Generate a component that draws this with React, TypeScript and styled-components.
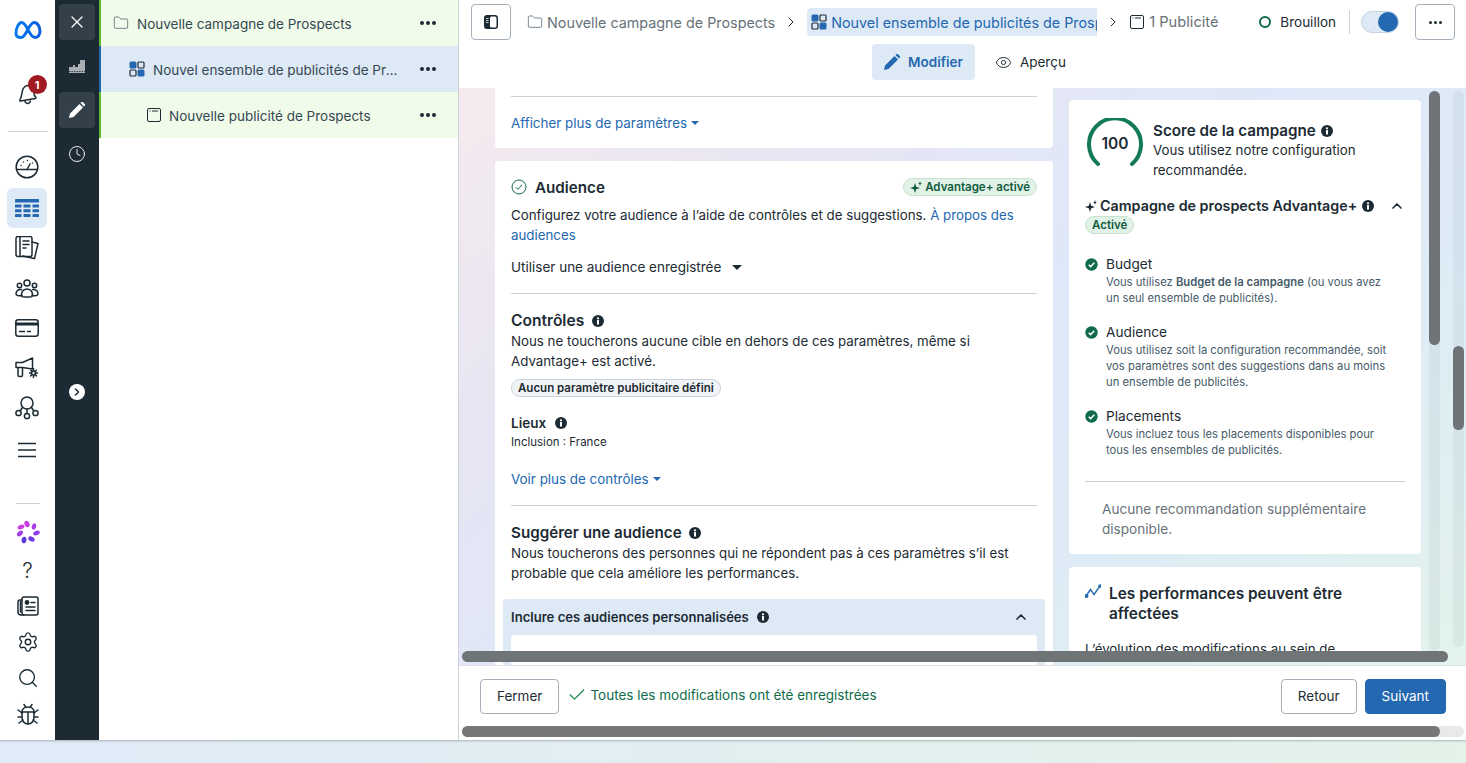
import React from 'react';
import styled, { createGlobalStyle } from 'styled-components';
import { Check, ChevronRight, ChevronUp, Clock, Eye, Folder, Search, Settings, X } from 'lucide-react';

const GlobalStyle = createGlobalStyle`
  html, body {
    margin: 0;
    padding: 0;
    height: 100%;
    overflow: hidden;
    font-family: "Inter", "Roboto", "Liberation Sans", sans-serif;
    color: #1c2b33;
    background: linear-gradient(90deg, #e0ebf8, #e3f3ea);
  }
  * { box-sizing: border-box; }
  svg { flex: none; }
`;

const Page = styled.div`
  width: 1466px;
  height: 763px;
`;

const Window = styled.div`
  display: flex;
  width: 1466px;
  height: 740px;
  background: #fff;
  box-shadow: 0 1px 2px rgba(0, 0, 0, 0.25);
`;

// Left navigation rail
const Rail = styled.nav`
  display: flex;
  flex-direction: column;
  align-items: center;
  flex: 0 0 55px;
  padding: 10px 0 8px;
`;

const RailLogo = styled.div`
  display: flex;
  align-items: center;
  justify-content: center;
  height: 40px;
`;

const RailBell = styled.div`
  position: relative;
  display: flex;
  align-items: center;
  justify-content: center;
  width: 40px;
  height: 40px;
  margin-top: 24px;
`;

const Badge = styled.span`
  position: absolute;
  top: 1px;
  left: 20px;
  display: flex;
  align-items: center;
  justify-content: center;
  width: 19px;
  height: 19px;
  border-radius: 50%;
  background: #a11a22;
  color: #fff;
  font-size: 11px;
  font-weight: 700;
`;

const RailDivider = styled.div<{ $width: number }>`
  flex: none;
  width: ${({ $width }) => $width}px;
  height: 1px;
  margin: 17px 0 15px;
  background: #cbd2d9;
`;

const RailGroup = styled.div`
  display: flex;
  flex-direction: column;
  gap: 0.5px;
  margin-right: 1px;
`;

const RailItem = styled.div<{ $active?: boolean }>`
  display: flex;
  align-items: center;
  justify-content: center;
  width: 40px;
  height: 40px;
  border-radius: 6px;
  background: ${({ $active }) => ($active ? '#dee9f6' : 'transparent')};
  color: #1c2b33;
`;

const RailBottom = styled.div`
  display: flex;
  flex-direction: column;
  align-items: center;
  margin-top: auto;
`;

const RailBottomDivider = styled.div`
  width: 24px;
  height: 1px;
  margin-bottom: 10px;
  background: #cbd2d9;
`;

const RailSmallItem = styled.div<{ $gapBelow?: boolean }>`
  display: flex;
  align-items: center;
  justify-content: center;
  width: 40px;
  height: 36px;
  margin-bottom: ${({ $gapBelow }) => ($gapBelow ? '2px' : '0')};
  color: #1c2b33;
`;

const QuestionMark = styled.span`
  font-size: 21px;
  font-weight: 300;
  line-height: 1;
`;

// Dark tool rail
const ToolRail = styled.div`
  display: flex;
  flex-direction: column;
  align-items: center;
  flex: 0 0 44px;
  gap: 8px;
  padding-top: 4px;
  background: #1c2b33;
`;

const ToolButton = styled.div<{ $active?: boolean }>`
  display: flex;
  align-items: center;
  justify-content: center;
  width: 36px;
  height: 36px;
  border-radius: 4px;
  background: ${({ $active }) => ($active ? '#344049' : 'transparent')};
  color: #fff;
`;

const ExpandButton = styled.div`
  display: flex;
  align-items: center;
  justify-content: center;
  width: 16px;
  height: 16px;
  margin-top: 204px;
  border-radius: 50%;
  background: #fff;
  color: #1c2b33;
`;

// Campaign tree
const TreePanel = styled.aside`
  flex: 0 0 360px;
  min-width: 0;
  border-right: 1px solid #cbd2d9;
`;

const TreeRow = styled.div<{ $indent: number; $selected?: boolean }>`
  display: flex;
  align-items: center;
  height: 46px;
  padding-left: ${({ $indent }) => $indent}px;
  padding-right: 22px;
  border-left: 2px solid ${({ $selected }) => ($selected ? '#2368b0' : '#65b92e')};
  background: ${({ $selected }) => ($selected ? '#dee9f6' : '#f1fbe9')};
`;

const TreeLabel = styled.span`
  flex: 1;
  min-width: 0;
  margin-left: 8px;
  margin-right: 20px;
  padding-top: 2px;
  overflow: hidden;
  white-space: nowrap;
  text-overflow: ellipsis;
  font-size: 13.5px;
  color: #344854;
`;

const Dots = styled.span`
  display: flex;
  flex: none;
  gap: 2px;
`;

const Dot = styled.i<{ $size: number }>`
  width: ${({ $size }) => $size}px;
  height: ${({ $size }) => $size}px;
  border-radius: 50%;
  background: #1c2b33;
`;

// Main column
const Main = styled.main`
  position: relative;
  display: flex;
  flex-direction: column;
  flex: 1;
  min-width: 0;
`;

const Header = styled.header`
  flex: 0 0 88px;
`;

const TopRow = styled.div`
  display: flex;
  align-items: center;
  height: 44px;
  padding: 0 11px 0 12px;
`;

const SquareButton = styled.div`
  display: flex;
  align-items: center;
  justify-content: center;
  flex: none;
  width: 40px;
  height: 36px;
  border: 1px solid #a5b0bb;
  border-radius: 4px;
  color: #1c2b33;
`;

const Crumb = styled.div`
  display: flex;
  align-items: center;
  flex: none;
  gap: 4px;
  font-size: 14.35px;
  color: #67737b;
`;

const CrumbFirst = styled(Crumb)`
  margin-left: 16px;
`;

const CrumbLast = styled(Crumb)`
  gap: 5px;
  margin-left: 1px;
  font-size: 14.7px;
`;

const CrumbActive = styled.div`
  display: flex;
  align-items: center;
  flex: 0 0 290px;
  gap: 4px;
  height: 28px;
  padding-left: 4px;
  overflow: hidden;
  border-radius: 4px 0 0 4px;
  background: #dee9f6;
  color: #2368b0;
  font-size: 14.35px;
  white-space: nowrap;
`;

const CrumbArrow = styled.span`
  display: flex;
  justify-content: center;
  flex: 0 0 32px;
  color: #1c2b33;
`;

const Status = styled.div`
  display: flex;
  align-items: center;
  margin-left: auto;
  font-size: 13.5px;
`;

const StatusRing = styled.span`
  width: 12px;
  height: 12px;
  margin-right: 9px;
  border: 2px solid #0f6b4a;
  border-radius: 50%;
`;

const StatusLine = styled.span`
  width: 1px;
  height: 24px;
  margin: 0 11px 0 13px;
  background: #cbd2d9;
`;

const Toggle = styled.div`
  display: flex;
  justify-content: flex-end;
  width: 38px;
  height: 22px;
  margin-right: 16px;
  border: 1px solid #c6d3e2;
  border-radius: 11px;
  background: #dee9f6;
`;

const ToggleKnob = styled.span`
  width: 20px;
  height: 20px;
  border-radius: 50%;
  background: #2368b0;
`;

const ModeRow = styled.div`
  display: flex;
  align-items: center;
  justify-content: center;
  height: 36px;
  padding-left: 13px;
`;

const ModeActive = styled.div`
  display: flex;
  align-items: center;
  gap: 8px;
  height: 36px;
  padding: 0 12px;
  border-radius: 4px;
  background: #dee9f6;
  color: #2368b0;
  font-size: 13.5px;
  font-weight: 600;
`;

const ModeIdle = styled.div`
  display: flex;
  align-items: center;
  gap: 8px;
  margin-left: 20px;
  font-size: 13.5px;
`;

// Editor area
const Content = styled.div`
  position: relative;
  display: flex;
  flex: 0 0 577px;
  gap: 16px;
  padding-left: 36px;
  overflow: hidden;
  background: linear-gradient(140deg, #f6ebef 0%, #e7e5f3 25%, #dfe8f8 48%, #deecf6 72%, #e3f3ec 100%);
`;

const LeftColumn = styled.div`
  display: flex;
  flex-direction: column;
  flex: 0 0 558px;
  gap: 13px;
`;

const RightColumn = styled.div`
  display: flex;
  flex-direction: column;
  flex: 0 0 352px;
  gap: 13px;
  padding-top: 12px;
`;

const Card = styled.section`
  flex: none;
  padding: 0 16px;
  border-radius: 4px;
  background: #fff;
`;

const TopCard = styled(Card)`
  height: 60px;
  border-radius: 0 0 4px 4px;
`;

const Divider = styled.hr`
  height: 1px;
  margin: 0;
  border: 0;
  background: #cbd2d9;
`;

const TopDivider = styled(Divider)`
  margin-top: 8px;
`;

const BlueLink = styled.a`
  color: #2368b0;
`;

const MoreLink = styled.div`
  display: flex;
  align-items: center;
  gap: 4px;
  font-size: 13.4px;
  line-height: 20px;
  color: #2368b0;
`;

const MoreLinkTop = styled(MoreLink)`
  margin-top: 16px;
`;

const Caret = styled.i<{ $size: number }>`
  width: 0;
  height: 0;
  border-left: ${({ $size }) => $size}px solid transparent;
  border-right: ${({ $size }) => $size}px solid transparent;
  border-top: ${({ $size }) => $size}px solid currentColor;
`;

const AudienceCard = styled(Card)`
  padding-top: 16px;
`;

const AudienceHead = styled.div`
  display: flex;
  align-items: center;
  height: 20px;
`;

const AudienceTitle = styled.h2`
  margin: 1px 0 0 8px;
  font-size: 15.2px;
  line-height: 20px;
  font-weight: 600;
`;

const Pill = styled.span<{ $tone: 'green' | 'grey' }>`
  display: flex;
  align-items: center;
  gap: 3px;
  width: fit-content;
  height: 18px;
  padding: 0 6px;
  border-radius: 9px;
  border: 1px solid ${({ $tone }) => ($tone === 'green' ? '#c5e3cf' : '#cbd2d9')};
  background: ${({ $tone }) => ($tone === 'green' ? '#e3f2e6' : '#f1f4f7')};
  color: ${({ $tone }) => ($tone === 'green' ? '#0f5c3f' : '#1c2b33')};
  font-size: 11.5px;
  font-weight: 600;
  white-space: nowrap;
`;

const HeadPill = styled(Pill)`
  margin-left: auto;
`;

const Paragraph = styled.p`
  margin: 0;
  font-size: 13.3px;
  line-height: 20px;
  color: #1c2b33;
`;

const IntroText = styled(Paragraph)`
  margin-top: 8px;
`;

const SavedSelect = styled.div`
  display: flex;
  align-items: center;
  gap: 11px;
  height: 20px;
  margin: 12px 0 16px;
  font-size: 13.5px;
`;

const SectionTitle = styled.h3`
  display: flex;
  align-items: center;
  gap: 8px;
  margin: 0;
  font-size: 15.2px;
  line-height: 20px;
  font-weight: 600;
`;

const ControlsTitle = styled(SectionTitle)`
  margin-top: 17px;
  font-size: 15.6px;
`;

const NoParamsPill = styled(Pill)`
  margin-top: 8px;
`;

const PlaceTitle = styled.div`
  display: flex;
  align-items: center;
  gap: 9px;
  margin-top: 17px;
  font-size: 13.5px;
  line-height: 18px;
  font-weight: 600;
`;

const PlaceText = styled.div`
  margin-top: 2px;
  font-size: 11.5px;
  line-height: 16px;
`;

const MoreControls = styled(MoreLink)`
  margin: 19px 0 16px;
`;

const SuggestTitle = styled(SectionTitle)`
  margin-top: 17px;
  gap: 7px;
`;

const Accordion = styled.div`
  margin: 16px -8px 0;
  padding: 0 8px;
  border-radius: 4px 4px 0 0;
  background: #dee9f6;
`;

const AccordionHead = styled.div`
  display: flex;
  align-items: center;
  gap: 8px;
  height: 36px;
  font-size: 13.1px;
  font-weight: 600;
`;

const AccordionToggle = styled.span`
  display: flex;
  margin-left: auto;
  margin-right: 8px;
`;

const AccordionBody = styled.div`
  height: 40px;
  border-radius: 4px 4px 0 0;
  background: #fff;
`;

const ScoreCard = styled(Card)`
  height: 454px;
  padding-top: 18px;
`;

const ScoreHead = styled.div`
  display: flex;
  gap: 10px;
`;

const ScoreGauge = styled.div`
  position: relative;
  flex: 0 0 56px;
  height: 50px;
  margin-left: 2px;
`;

const ScoreNumber = styled.span`
  position: absolute;
  top: 16px;
  left: 0;
  width: 56px;
  text-align: center;
  font-size: 15.5px;
  font-weight: 600;
`;

const ScoreBody = styled.div`
  flex: 1;
  margin-top: 3px;
`;

const ScoreTitle = styled(SectionTitle)`
  gap: 5px;
`;

const ScoreText = styled(Paragraph)`
  margin-top: -1px;
`;

const AdvantageRow = styled.div`
  display: flex;
  align-items: center;
  gap: 3px;
  margin-top: 16px;
  font-size: 14.3px;
  line-height: 20px;
  font-weight: 600;
  white-space: nowrap;
`;

const AdvantageInfo = styled.span`
  display: flex;
  margin-left: 2px;
`;

const AdvantageToggle = styled.span`
  display: flex;
  margin-left: auto;
`;

const CheckList = styled.div`
  display: flex;
  flex-direction: column;
  gap: 17px;
  margin-top: 21px;
`;

const CheckItem = styled.div`
  display: flex;
  gap: 8px;
`;

const CheckMark = styled.span`
  display: flex;
  flex: none;
  margin-top: 3px;
`;

const CheckTitle = styled.div`
  font-size: 13.7px;
  line-height: 18px;
`;

const CheckText = styled.div`
  max-width: 291px;
  margin-top: 1px;
  font-size: 11.25px;
  line-height: 16px;
  color: #465a69;
`;

const CheckStrong = styled.strong`
  font-weight: 600;
`;

const NoticeDivider = styled(Divider)`
  margin-top: 23px;
`;

const Notice = styled(Paragraph)`
  margin-top: 17px;
  padding-left: 17px;
  font-size: 13.6px;
  color: #67737b;
`;

const PerfCard = styled(Card)`
  padding-top: 17px;
`;

const PerfHead = styled.div`
  display: flex;
  gap: 8px;
`;

const PerfIcon = styled.span`
  display: flex;
  flex: none;
`;

const PerfTitle = styled.h3`
  margin: 0;
  font-size: 15.4px;
  line-height: 20px;
  font-weight: 600;
`;

const PerfText = styled(Paragraph)`
  margin-top: 15px;
`;

const HorizontalBar = styled.div`
  position: absolute;
  left: 3px;
  top: 563px;
  width: 986px;
  height: 11px;
  border-radius: 6px;
  background: #6f7476;
`;

const VerticalTrack = styled.div<{ $left: number; $height: number }>`
  position: absolute;
  top: 3px;
  left: ${({ $left }) => $left}px;
  width: 11px;
  height: ${({ $height }) => $height}px;
  border-radius: 6px;
  background: rgba(28, 43, 51, 0.05);
`;

const VerticalThumb = styled.div<{ $top: number; $height: number }>`
  position: absolute;
  top: ${({ $top }) => $top}px;
  left: 0;
  width: 11px;
  height: ${({ $height }) => $height}px;
  border-radius: 6px;
  background: #6f7276;
`;

const Footer = styled.footer`
  display: flex;
  align-items: center;
  flex: 0 0 61px;
  padding: 0 20px 0 21px;
  border-top: 1px solid #dfe3e7;
`;

const OutlineButton = styled.div`
  display: flex;
  align-items: center;
  justify-content: center;
  height: 35px;
  padding: 0 16px;
  border: 1px solid #a5b0bb;
  border-radius: 4px;
  font-size: 13.5px;
`;

const NextButton = styled(OutlineButton)`
  margin-left: 8px;
  border-color: #2368b0;
  background: #2368b0;
  color: #fff;
`;

const SavedNote = styled.div`
  display: flex;
  align-items: center;
  gap: 3px;
  margin: -2px auto 0 8px;
  color: #0f6b4a;
  font-size: 13.5px;
`;

const BottomScroll = styled.div`
  position: relative;
  flex: 0 0 14px;
  margin: 0 2px 0 3px;
`;

const BottomTrack = styled.div`
  height: 11px;
  border-radius: 6px;
  background: #e9e9e9;
`;

const BottomThumb = styled.div`
  position: absolute;
  top: 0;
  left: 0;
  width: 978px;
  height: 11px;
  border-radius: 6px;
  background: #777;
`;

// Drawn icons
const Line = { fill: 'none', stroke: 'currentColor', strokeWidth: 1.5, strokeLinecap: 'round', strokeLinejoin: 'round' } as const;

const MetaLogo = () => (
  <svg width="28" height="20" viewBox="0 0 28 20">
    <defs>
      <linearGradient id="meta" x1="0" x2="1" y1="0" y2="0">
        <stop offset="0" stopColor="#0a7cf0" />
        <stop offset="1" stopColor="#0a5fe0" />
      </linearGradient>
    </defs>
    <path
      d="M2 13.500C2 8 4.600 2.500 7.800 2.500c5 0 7.400 15 13 15 2.800 0 5.200-2.200 5.200-6.200 0-4.800-2.600-8.800-6-8.800-5 0-8 15-12.600 15C4.600 17.500 2 16.500 2 13.500Z"
      fill="none"
      stroke="url(#meta)"
      strokeWidth="3"
    />
  </svg>
);

const BellIcon = () => (
  <svg width="24" height="24" viewBox="0 0 24 24" {...Line}>
    <path d="M6.500 8.500c.8-3.800 4-5.800 7.300-4.800 3.200 1 4.700 3.800 4.200 7.300-.2 1.700.5 3 1.800 4.300.3.600 0 1-.5 1.100L4.500 19c-.6 0-.9-.4-.6-.9 1.600-2.900 2-6 2.600-9.600Z" />
    <path d="M9 19.500c.5 1.500 2 2.300 3.500 1.800 1-.3 1.700-1.100 1.800-2.300" />
  </svg>
);

const GaugeIcon = () => (
  <svg width="24" height="24" viewBox="0 0 24 24" {...Line}>
    <circle cx="12" cy="12" r="10.800" />
    <path d="M1.500 14.500h21" />
    <path d="M12 14.500l3-5.500M6 10.500h.01M8.500 7h.01M12.500 5.500h.01M17.500 8h.01" />
  </svg>
);

const TableIcon = () => (
  <svg width="24" height="20" viewBox="0 0 24 20" fill="#2368b0">
    <rect x="0" y="1" width="24" height="3.600" rx=".5" />
    <rect x="0" y="6.500" width="6.500" height="3" rx=".5" />
    <rect x="8.500" y="6.500" width="7" height="3" rx=".5" />
    <rect x="17.500" y="6.500" width="6.500" height="3" rx=".5" />
    <rect x="0" y="11.200" width="6.500" height="3" rx=".5" />
    <rect x="8.500" y="11.200" width="7" height="3" rx=".5" />
    <rect x="17.500" y="11.200" width="6.500" height="3" rx=".5" />
    <rect x="0" y="16" width="6.500" height="3" rx=".5" />
    <rect x="8.500" y="16" width="7" height="3" rx=".5" />
    <rect x="17.500" y="16" width="6.500" height="3" rx=".5" />
  </svg>
);

const PagesIcon = () => (
  <svg width="24" height="25" viewBox="0 1 24 25" {...Line}>
    <rect x="1" y="1.500" width="16" height="20" rx="2" />
    <path d="M5 2v19M8 6h6M8 9.500h6M8 13h3" />
    <path d="M17 7l6 1.500-3.500 15-12-2.500" />
  </svg>
);

const PeopleIcon = () => (
  <svg width="24" height="20" viewBox="0 0 24 20" {...Line}>
    <circle cx="12" cy="4" r="3" />
    <circle cx="4.500" cy="6.500" r="2.200" />
    <circle cx="19.500" cy="6.500" r="2.200" />
    <path d="M7 17.500c-1.500-4 1-7.500 5-7.500s6.500 3.500 5 7.500c-.3.800-9.700.800-10 0Z" />
    <path d="M6.500 10.500C3.500 10 1 12 1 15c0 1.500 3 2 6 1.500M17.500 10.500c3-.5 5.500 1.500 5.500 4.500 0 1.500-3 2-6 1.500" />
  </svg>
);

const CardIcon = () => (
  <svg width="24" height="18" viewBox="0 1 24 18" overflow="visible" fill="none" stroke="currentColor" strokeWidth="1.500">
    <rect x=".8" y=".8" width="22.400" height="16.400" rx="2.500" />
    <path d="M.8 5h22.400" strokeWidth="3" />
    <path d="M4 12.500h6M12 12.500h4" />
  </svg>
);

const MegaphoneIcon = () => (
  <svg width="24" height="24" viewBox="0 3 24 24" overflow="visible" {...Line}>
    <path d="M1 7.500h6.500L17.500 3v11L7.500 12.500H1z" />
    <path d="M3 12.500V20c0 1 .5 1.500 1.500 1.500H6c1 0 1.500-.5 1.500-1.500v-7.500" />
    <circle cx="18.500" cy="18" r="2" />
    <path d="M18.500 13.500v2M18.500 20.500v2M14.500 18h2M20.500 18h2M15.700 15.200l1.400 1.400M20 19.500l1.400 1.400M21.300 15.200l-1.400 1.400M17 19.500l-1.400 1.400" />
  </svg>
);

const NetworkIcon = () => (
  <svg width="24" height="24" viewBox="0 2 24 24" overflow="visible" {...Line}>
    <circle cx="12" cy="7" r="6" />
    <circle cx="3.500" cy="17" r="2.600" />
    <circle cx="12" cy="20" r="2.600" />
    <circle cx="20.500" cy="17" r="2.600" />
    <path d="M12 13v4.400M7.500 11.500 5.200 15M16.500 11.500l2.300 3.500" />
  </svg>
);

const MenuIcon = () => (
  <svg width="18" height="16" viewBox="0 1 18 16" overflow="visible" fill="none" stroke="currentColor" strokeWidth="1.300">
    <path d="M0 1.500h18M0 8h18M0 14.500h18" />
  </svg>
);

const FlowerIcon = () => (
  <svg width="24" height="24" viewBox="0 0 24 24">
    <ellipse cx="11" cy="4" rx="2.400" ry="3.300" fill="#c23ee0" transform="rotate(-25 11 4)" />
    <ellipse cx="18" cy="6.500" rx="2.200" ry="3.200" fill="#a83ee8" transform="rotate(15 18 6.500)" />
    <ellipse cx="20.500" cy="13" rx="2.200" ry="3.400" fill="#8d3df0" transform="rotate(70 20.500 13)" />
    <ellipse cx="15.500" cy="19" rx="2.400" ry="3.400" fill="#6f3ce8" transform="rotate(120 15.500 19)" />
    <ellipse cx="8" cy="20" rx="2.400" ry="3.200" fill="#5a38e0" transform="rotate(10 8 20)" />
    <ellipse cx="4" cy="13.500" rx="2.200" ry="3.400" fill="#a53de8" transform="rotate(50 4 13.500)" />
    <ellipse cx="5" cy="7" rx="2.200" ry="3.600" fill="#cf3fe0" transform="rotate(70 5 7)" />
  </svg>
);

const NewsIcon = () => (
  <svg width="22" height="20" viewBox="0 0 22 20" {...Line}>
    <rect x="5" y="1" width="16" height="18" rx="2" />
    <path d="M5 4H3c-1 0-2 1-2 2v10c0 2 1.500 3 3 3h3" />
    <path d="M3.500 5.500V16" />
    <circle cx="10" cy="6.500" r="1.700" fill="currentColor" />
    <path d="M9 11h9M9 14.500h9M14 6.500h4" />
  </svg>
);

const BugIcon = () => (
  <svg width="22" height="22" viewBox="0 0 22 22" {...Line}>
    <path d="M5 9c0-3 2.500-5 6-5s6 2 6 5v6c0 3-2.500 6-6 6s-6-3-6-6z" />
    <path d="M5 9h12M11 9v12M7 1.500 9 4.500M15 1.500 13 4.500M1 7l4 3M21 7l-4 3M1 14h4M21 14h-4M2 20l4-3M20 20l-4-3" />
  </svg>
);

const ChartSteps = () => (
  <svg width="16" height="14" viewBox="0 0 16 14" fill="#a9aeb2">
    <path d="M0 14V8h4V6h2v2h3V5h2V1h5v13z" />
    <path d="M0 12.500h16" stroke="#1c2b33" strokeDasharray="1.500 1" strokeWidth=".8" />
  </svg>
);

const PencilIcon = () => (
  <svg width="16" height="16" viewBox="0 0 16 16" fill="currentColor">
    <path d="M0 16l1-4.500L10.500 2l3.500 3.500L4.500 15zM11.500 1l1-1c.4-.3 1-.3 1.300 0l2.200 2.200c.3.400.3.900 0 1.300l-1 1z" />
  </svg>
);

const FolderIcon = () => <Folder size={16} strokeWidth={1.1} color="#465a69" />;

const AdSetIcon = () => (
  <svg width="16" height="16" viewBox="0 0 16 16">
    <rect x=".5" y=".5" width="7" height="7" rx="1.500" fill="#2368b0" />
    <rect x="9" y="1" width="6" height="6" rx="1" fill="#dee9f6" stroke="#1c2b33" strokeWidth="1.200" />
    <rect x="1" y="9" width="6" height="6" rx="1" fill="#dee9f6" stroke="#1c2b33" strokeWidth="1.200" />
    <rect x="8.500" y="8.500" width="7" height="7" rx="1.500" fill="#2368b0" />
  </svg>
);

const AdIcon = () => (
  <svg width="14" height="14" viewBox="0 0 14 14" fill="none" stroke="#1c2b33" strokeWidth="1">
    <rect x=".5" y=".5" width="13" height="13" rx="1.500" />
    <path d="M2.500 3h1M5 3h6" />
  </svg>
);

const PanelIcon = () => (
  <svg width="16" height="16" viewBox="0 0 16 16">
    <rect x="1" y="1" width="14" height="14" rx="3" fill="#1c2b33" />
    <rect x="7" y="2.500" width="6.500" height="11" rx="1.500" fill="#fff" />
    <path d="M3 4.500h2.500M3 6.500h2.500M3 8.500h2.500" stroke="#fff" strokeWidth=".8" />
  </svg>
);

const InfoIcon = () => (
  <svg width="12" height="12" viewBox="0 0 12 12">
    <circle cx="6" cy="6" r="6" fill="#1c2b33" />
    <circle cx="6" cy="3.300" r="1.100" fill="#fff" />
    <rect x="5" y="5" width="2" height="4.500" rx=".3" fill="#fff" />
  </svg>
);

const Sparkle = () => (
  <svg width="12" height="12" viewBox="0 0 12 12" fill="currentColor">
    <path d="M5 2 6.200 5.800 10 7 6.200 8.200 5 12 3.800 8.200 0 7 3.800 5.800Z" />
    <path d="M10 0l.6 1.900L12 2.500l-1.400.6L10 5l-.6-1.900L8 2.500l1.400-.6z" />
  </svg>
);

const CircleCheck = () => (
  <svg width="16" height="16" viewBox="0 0 16 16" fill="none" stroke="#0f6b4a" strokeWidth="1">
    <circle cx="8" cy="8" r="7" />
    <path d="M4.800 8.200 7 10.400l4.200-4.600" />
  </svg>
);

const SolidCheck = () => (
  <svg width="13" height="13" viewBox="0 0 13 13">
    <circle cx="6.500" cy="6.500" r="6.200" fill="#0f6b4a" />
    <path d="M3.700 6.700 5.600 8.600l3.700-3.900" fill="none" stroke="#fff" strokeWidth="1.500" />
  </svg>
);

const TrendIcon = () => (
  <svg width="16" height="16" viewBox="0 0 16 16" fill="none" stroke="#2368b0" strokeWidth="1.400">
    <path d="M1 12 5.500 5.500l3.500 5L15 2" />
    <circle cx="1.500" cy="12" r="1.300" fill="#2368b0" />
    <circle cx="15" cy="2" r="1" fill="#2368b0" />
  </svg>
);

const ScoreArc = () => (
  <svg width="56" height="50" viewBox="0 0 56 50" fill="none" stroke="#137a56" strokeWidth="4" strokeLinecap="round">
    <path d="M11 46A26 26 0 1 1 45 46" />
  </svg>
);

const DotsMenu = ({ size }: { size: number }) => (
  <Dots>
    <Dot $size={size} />
    <Dot $size={size} />
    <Dot $size={size} />
  </Dots>
);

const checks = [
  {
    title: 'Budget',
    text: (
      <>
        Vous utilisez <CheckStrong>Budget de la campagne</CheckStrong> (ou vous avez un seul ensemble de publicités).
      </>
    ),
  },
  {
    title: 'Audience',
    text: 'Vous utilisez soit la configuration recommandée, soit vos paramètres sont des suggestions dans au moins un ensemble de publicités.',
  },
  {
    title: 'Placements',
    text: 'Vous incluez tous les placements disponibles pour tous les ensembles de publicités.',
  },
];

const App: React.FC = () => {
  return (
    <Page>
      <GlobalStyle />
      <Window>
        <Rail>
          <RailLogo>
            <MetaLogo />
          </RailLogo>
          <RailBell>
            <BellIcon />
            <Badge>1</Badge>
          </RailBell>
          <RailDivider $width={40} />
          <RailGroup>
            <RailItem><GaugeIcon /></RailItem>
            <RailItem $active><TableIcon /></RailItem>
            <RailItem><PagesIcon /></RailItem>
            <RailItem><PeopleIcon /></RailItem>
            <RailItem><CardIcon /></RailItem>
            <RailItem><MegaphoneIcon /></RailItem>
            <RailItem><NetworkIcon /></RailItem>
            <RailItem><MenuIcon /></RailItem>
          </RailGroup>
          <RailBottom>
            <RailBottomDivider />
            <RailSmallItem $gapBelow><FlowerIcon /></RailSmallItem>
            <RailSmallItem><QuestionMark>?</QuestionMark></RailSmallItem>
            <RailSmallItem><NewsIcon /></RailSmallItem>
            <RailSmallItem><Settings size={22} strokeWidth={1.5} /></RailSmallItem>
            <RailSmallItem><Search size={22} strokeWidth={1.5} /></RailSmallItem>
            <RailSmallItem><BugIcon /></RailSmallItem>
          </RailBottom>
        </Rail>

        <ToolRail>
          <ToolButton $active><X size={20} strokeWidth={1.5} /></ToolButton>
          <ToolButton><ChartSteps /></ToolButton>
          <ToolButton $active><PencilIcon /></ToolButton>
          <ToolButton><Clock size={18} strokeWidth={1.2} /></ToolButton>
          <ExpandButton><ChevronRight size={12} strokeWidth={3} /></ExpandButton>
        </ToolRail>

        <TreePanel>
          <TreeRow $indent={12}>
            <FolderIcon />
            <TreeLabel>Nouvelle campagne de Prospects</TreeLabel>
            <DotsMenu size={4} />
          </TreeRow>
          <TreeRow $indent={28} $selected>
            <AdSetIcon />
            <TreeLabel>Nouvel ensemble de publicités de Prospects</TreeLabel>
            <DotsMenu size={4} />
          </TreeRow>
          <TreeRow $indent={46}>
            <AdIcon />
            <TreeLabel>Nouvelle publicité de Prospects</TreeLabel>
            <DotsMenu size={4} />
          </TreeRow>
        </TreePanel>

        <Main>
          <Header>
            <TopRow>
              <SquareButton><PanelIcon /></SquareButton>
              <CrumbFirst>
                <FolderIcon />
                Nouvelle campagne de Prospects
              </CrumbFirst>
              <CrumbArrow><ChevronRight size={16} strokeWidth={1.5} /></CrumbArrow>
              <CrumbActive>
                <AdSetIcon />
                Nouvel ensemble de publicités de Prospects
              </CrumbActive>
              <CrumbArrow><ChevronRight size={16} strokeWidth={1.5} /></CrumbArrow>
              <CrumbLast>
                <AdIcon />
                1 Publicité
              </CrumbLast>
              <Status>
                <StatusRing />
                Brouillon
                <StatusLine />
              </Status>
              <Toggle><ToggleKnob /></Toggle>
              <SquareButton><DotsMenu size={3} /></SquareButton>
            </TopRow>
            <ModeRow>
              <ModeActive>
                <PencilIcon />
                Modifier
              </ModeActive>
              <ModeIdle>
                <Eye size={17} strokeWidth={1.4} />
                Aperçu
              </ModeIdle>
            </ModeRow>
          </Header>

          <Content>
            <LeftColumn>
              <TopCard>
                <TopDivider />
                <MoreLinkTop>
                  Afficher plus de paramètres
                  <Caret $size={4} />
                </MoreLinkTop>
              </TopCard>
              <AudienceCard>
                <AudienceHead>
                  <CircleCheck />
                  <AudienceTitle>Audience</AudienceTitle>
                  <HeadPill $tone="green">
                    <Sparkle />
                    Advantage+ activé
                  </HeadPill>
                </AudienceHead>
                <IntroText>
                  Configurez votre audience à l’aide de contrôles et de suggestions.{' '}
                  <BlueLink>À propos des audiences</BlueLink>
                </IntroText>
                <SavedSelect>
                  Utiliser une audience enregistrée
                  <Caret $size={5} />
                </SavedSelect>
                <Divider />
                <ControlsTitle>
                  Contrôles
                  <InfoIcon />
                </ControlsTitle>
                <Paragraph>
                  Nous ne toucherons aucune cible en dehors de ces paramètres, même si Advantage+ est activé.
                </Paragraph>
                <NoParamsPill $tone="grey">Aucun paramètre publicitaire défini</NoParamsPill>
                <PlaceTitle>
                  Lieux
                  <InfoIcon />
                </PlaceTitle>
                <PlaceText>Inclusion : France</PlaceText>
                <MoreControls>
                  Voir plus de contrôles
                  <Caret $size={4} />
                </MoreControls>
                <Divider />
                <SuggestTitle>
                  Suggérer une audience
                  <InfoIcon />
                </SuggestTitle>
                <Paragraph>
                  Nous toucherons des personnes qui ne répondent pas à ces paramètres s’il est probable que cela améliore les performances.
                </Paragraph>
                <Accordion>
                  <AccordionHead>
                    Inclure ces audiences personnalisées
                    <InfoIcon />
                    <AccordionToggle><ChevronUp size={16} strokeWidth={2.5} /></AccordionToggle>
                  </AccordionHead>
                  <AccordionBody />
                </Accordion>
              </AudienceCard>
            </LeftColumn>

            <RightColumn>
              <ScoreCard>
                <ScoreHead>
                  <ScoreGauge>
                    <ScoreArc />
                    <ScoreNumber>100</ScoreNumber>
                  </ScoreGauge>
                  <ScoreBody>
                    <ScoreTitle>
                      Score de la campagne
                      <InfoIcon />
                    </ScoreTitle>
                    <ScoreText>Vous utilisez notre configuration recommandée.</ScoreText>
                  </ScoreBody>
                </ScoreHead>
                <AdvantageRow>
                  <Sparkle />
                  Campagne de prospects Advantage+
                  <AdvantageInfo><InfoIcon /></AdvantageInfo>
                  <AdvantageToggle><ChevronUp size={16} strokeWidth={2.5} /></AdvantageToggle>
                </AdvantageRow>
                <Pill $tone="green">Activé</Pill>
                <CheckList>
                  {checks.map(check => (
                    <CheckItem key={check.title}>
                      <CheckMark><SolidCheck /></CheckMark>
                      <div>
                        <CheckTitle>{check.title}</CheckTitle>
                        <CheckText>{check.text}</CheckText>
                      </div>
                    </CheckItem>
                  ))}
                </CheckList>
                <NoticeDivider />
                <Notice>Aucune recommandation supplémentaire disponible.</Notice>
              </ScoreCard>
              <PerfCard>
                <PerfHead>
                  <PerfIcon><TrendIcon /></PerfIcon>
                  <PerfTitle>Les performances peuvent être affectées</PerfTitle>
                </PerfHead>
                <PerfText>L’évolution des modifications au sein de</PerfText>
              </PerfCard>
            </RightColumn>

            <VerticalTrack $left={970} $height={560}>
              <VerticalThumb $top={0} $height={254} />
            </VerticalTrack>
            <VerticalTrack $left={994} $height={556}>
              <VerticalThumb $top={255} $height={84} />
            </VerticalTrack>
            <HorizontalBar />
          </Content>

          <Footer>
            <OutlineButton>Fermer</OutlineButton>
            <SavedNote>
              <Check size={20} strokeWidth={1.5} color="#1a8a4a" />
              Toutes les modifications ont été enregistrées
            </SavedNote>
            <OutlineButton>Retour</OutlineButton>
            <NextButton>Suivant</NextButton>
          </Footer>

          <BottomScroll>
            <BottomTrack />
            <BottomThumb />
          </BottomScroll>
        </Main>
      </Window>
    </Page>
  );
};

export default App;
